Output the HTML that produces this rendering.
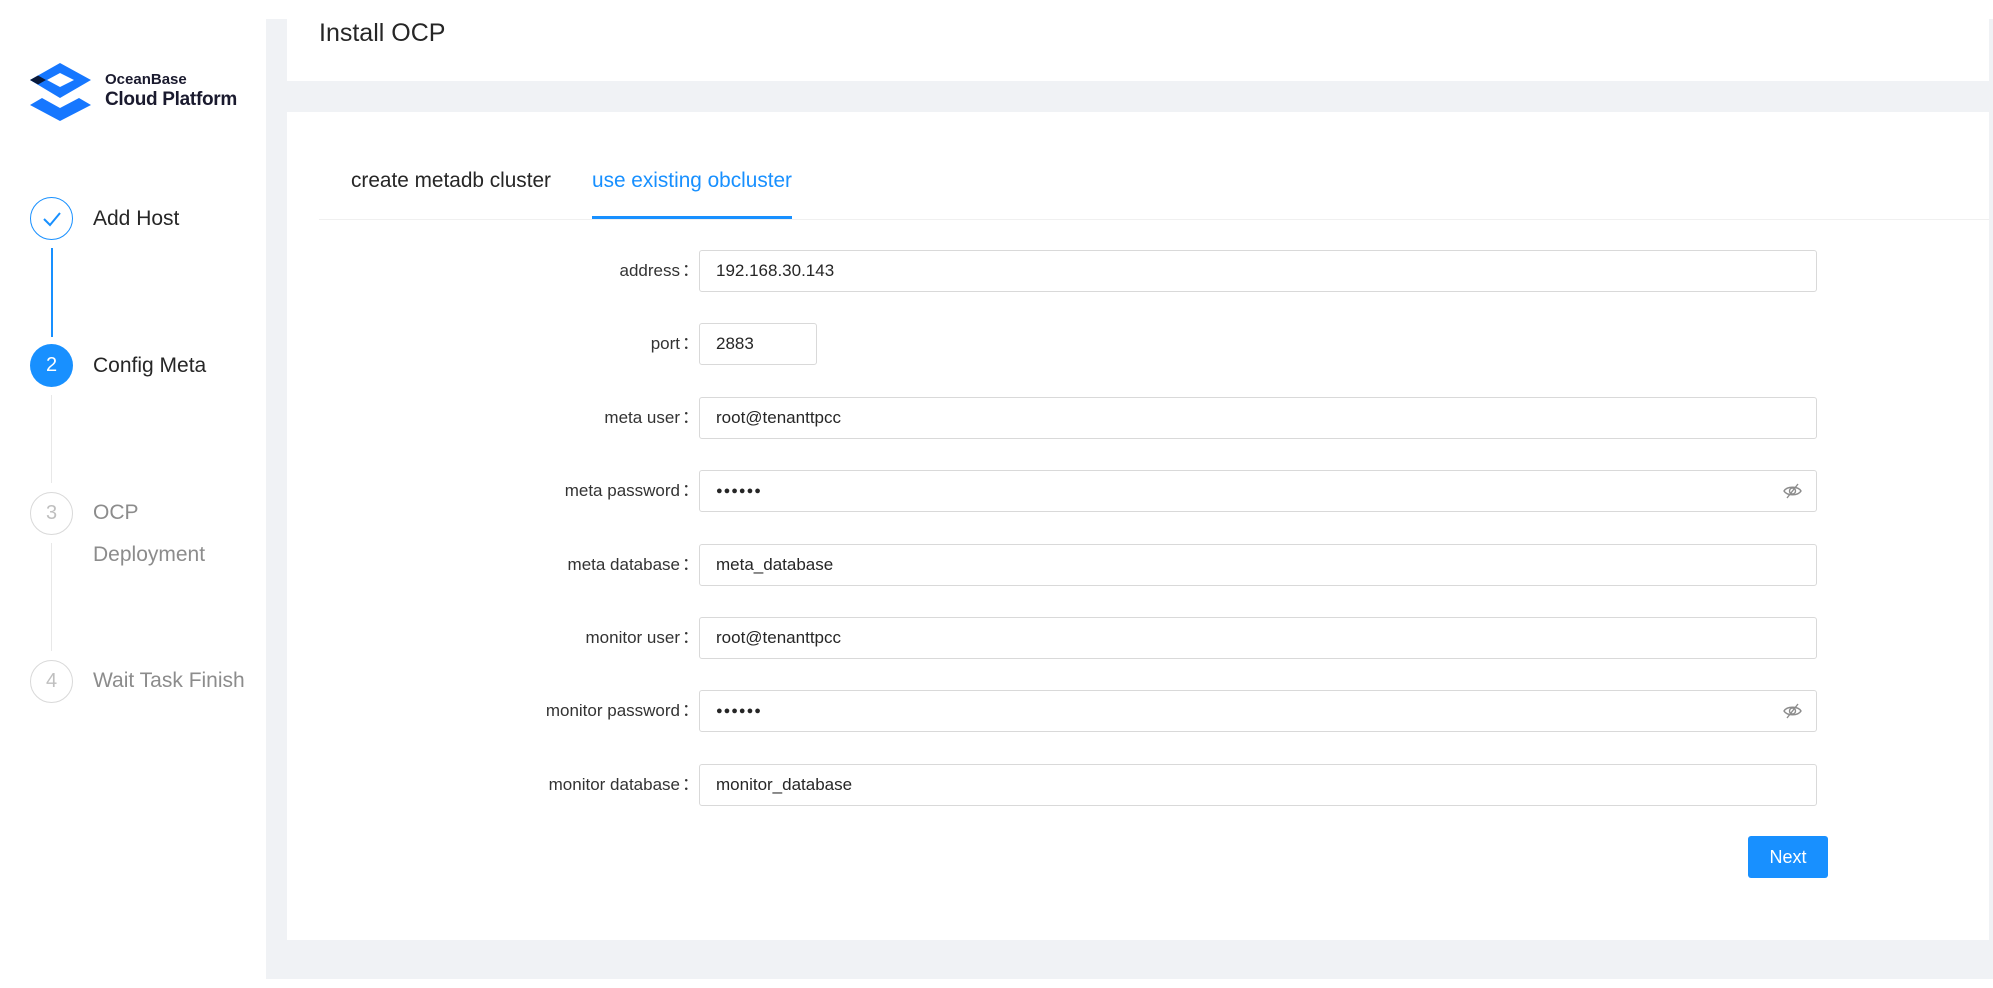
<!DOCTYPE html>
<html><head><meta charset="utf-8"><style>
*{margin:0;padding:0;box-sizing:border-box}
body{width:1993px;height:988px;background:#fff;font-family:"Liberation Sans",Arial,sans-serif;position:relative;overflow:hidden;color:#262626}
.abs{position:absolute}
.gray{background:#f0f2f5}
.circ{position:absolute;width:43px;height:43px;border-radius:50%;left:30px;display:flex;align-items:center;justify-content:center;font-size:20px}
.step{position:absolute;left:93px;font-size:21px;line-height:28px}
.lbl{position:absolute;right:1300px;font-size:17px;color:#333;text-align:right;white-space:nowrap;line-height:42px}
.lbl span{margin-left:2px;margin-right:-6px}
.inp{position:absolute;left:699px;width:1118px;height:42px;border:1px solid #d9d9d9;border-radius:3px;font-size:17px;line-height:40px;padding-left:16px;color:#262626;background:#fff}
.pw{font-size:11px;letter-spacing:1px}
</style></head><body>
<div class="abs gray" style="left:266px;top:19px;width:21px;height:960px"></div>
<div class="abs gray" style="left:266px;top:81px;width:1727px;height:31px"></div>
<div class="abs gray" style="left:266px;top:940px;width:1727px;height:39px"></div>
<div class="abs gray" style="left:1989px;top:19px;width:4px;height:960px"></div>

<svg class="abs" style="left:30px;top:63px" width="61" height="58" viewBox="0 0 61 58">
<path fill="#1677ff" fill-rule="evenodd" d="M0 17L30 0L61 17L30 35Z M17 17L30 10L44 17L30 24Z"/>
<path fill="#0a1a3a" d="M0 17L8 12.5L16 17L8 21.5Z"/>
<path fill="#1677ff" d="M0 42L12 35L30 45L49 35L61 42L30 58Z"/>
</svg>
<div class="abs" style="left:105px;top:71px;font-size:15px;font-weight:bold;color:#1a1a2e">OceanBase</div>
<div class="abs" style="left:105px;top:89px;font-size:19px;font-weight:bold;color:#1a1a2e;letter-spacing:-0.3px">Cloud Platform</div>

<div class="circ" style="top:197px;border:1px solid #1890ff;color:#1890ff">
<svg width="20" height="16" viewBox="0 0 20 16"><path d="M2 8L8 14L18 2" fill="none" stroke="#1890ff" stroke-width="2"/></svg></div>
<div class="step" style="top:205px">Add Host</div>
<div class="abs" style="left:51px;top:248px;width:2px;height:89px;background:#1890ff"></div>
<div class="circ" style="top:344px;background:#1890ff;color:#fff">2</div>
<div class="step" style="top:352px">Config Meta</div>
<div class="abs" style="left:51px;top:395px;width:1px;height:88px;background:#e8e8e8"></div>
<div class="circ" style="top:492px;border:1px solid #d9d9d9;color:#bfbfbf">3</div>
<div class="step" style="top:499px;color:#8c8c8c">OCP</div>
<div class="step" style="top:541px;color:#8c8c8c">Deployment</div>
<div class="abs" style="left:51px;top:543px;width:1px;height:108px;background:#e8e8e8"></div>
<div class="circ" style="top:660px;border:1px solid #d9d9d9;color:#bfbfbf">4</div>
<div class="step" style="top:667px;color:#8c8c8c">Wait Task Finish</div>

<div class="abs" style="left:319px;top:19px;font-size:25px;color:#262626">Install OCP</div>

<div class="abs" style="left:351px;top:169px;font-size:20.8px;color:#262626">create metadb cluster</div>
<div class="abs" style="left:592px;top:169px;font-size:20.8px;color:#1890ff">use existing obcluster</div>
<div class="abs" style="left:319px;top:219px;width:1670px;height:1px;background:#f0f0f0"></div>
<div class="abs" style="left:592px;top:216px;width:200px;height:3px;background:#1890ff"></div>

<div class="lbl" style="top:250px">address<span>：</span></div><div class="inp" style="top:250px">192.168.30.143</div>
<div class="lbl" style="top:323px">port<span>：</span></div><div class="inp" style="top:323px;width:118px">2883</div>
<div class="lbl" style="top:397px">meta user<span>：</span></div><div class="inp" style="top:397px">root@tenanttpcc</div>
<div class="lbl" style="top:470px">meta password<span>：</span></div><div class="inp pw" style="top:470px">●●●●●●</div>
<div class="lbl" style="top:544px">meta database<span>：</span></div><div class="inp" style="top:544px">meta_database</div>
<div class="lbl" style="top:617px">monitor user<span>：</span></div><div class="inp" style="top:617px">root@tenanttpcc</div>
<div class="lbl" style="top:690px">monitor password<span>：</span></div><div class="inp pw" style="top:690px">●●●●●●</div>
<div class="lbl" style="top:764px">monitor database<span>：</span></div><div class="inp" style="top:764px">monitor_database</div>

<svg class="abs" style="left:1783px;top:482px" width="19" height="18" viewBox="0 0 19 18"><path d="M1 9C4 4 15 4 18 9C15 14 4 14 1 9Z" fill="none" stroke="#8c8c8c" stroke-width="1.4"/><circle cx="9.5" cy="9" r="3" fill="none" stroke="#8c8c8c" stroke-width="1.4"/><path d="M4 16L15 2" stroke="#8c8c8c" stroke-width="1.4"/></svg>
<svg class="abs" style="left:1783px;top:702px" width="19" height="18" viewBox="0 0 19 18"><path d="M1 9C4 4 15 4 18 9C15 14 4 14 1 9Z" fill="none" stroke="#8c8c8c" stroke-width="1.4"/><circle cx="9.5" cy="9" r="3" fill="none" stroke="#8c8c8c" stroke-width="1.4"/><path d="M4 16L15 2" stroke="#8c8c8c" stroke-width="1.4"/></svg>

<div class="abs" style="left:1748px;top:836px;width:80px;height:42px;background:#1890ff;border-radius:3px;color:#fff;font-size:18px;line-height:42px;text-align:center">Next</div>
</body></html>
